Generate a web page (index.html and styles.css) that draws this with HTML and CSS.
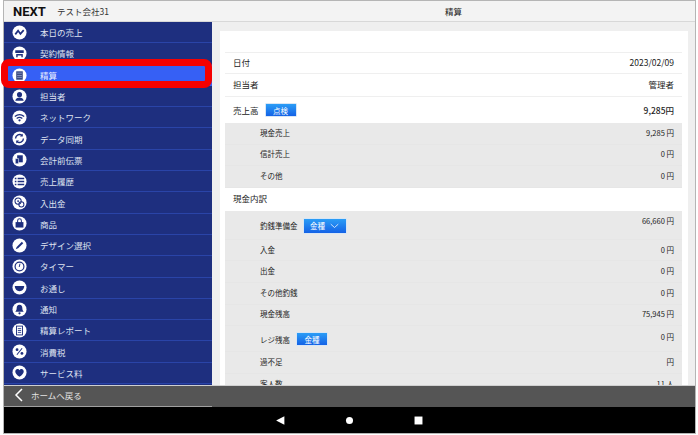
FILE: index.html
```html
<!DOCTYPE html>
<html lang="ja">
<head>
    <meta charset="UTF-8">
    <meta name="viewport" content="width=device-width, initial-scale=1.0">
    <title>精算</title>
    <link rel="stylesheet" href="styles.css">
</head>
<body>
    <div class="frame">
        <header class="topbar">
            <div class="brand"><span class="logo">NEXT</span><span class="company">テスト会社31</span></div>
            <div class="page-title">精算</div>
        </header>
        <div class="middle">
            <nav class="sidebar">
                <a class="menu-item"><svg class="icon" viewBox="0 0 16 16"><circle cx="8" cy="8" r="7.5" fill="#fff"/><path d="M3.5 10 6.5 6 9 9.5 12.5 5.5" fill="none" stroke="#1e2f7f" stroke-width="1.8"/></svg>本日の売上</a>
                <a class="menu-item"><svg class="icon" viewBox="0 0 16 16"><circle cx="8" cy="8" r="7.5" fill="#fff"/><path d="M3.5 4.5h9v3h-9zM4.5 8.5h7v3.5h-1.5v-2h-4v2h-1.500z" fill="#1e2f7f"/></svg>契約情報</a>
                <a class="menu-item active"><svg class="icon" viewBox="0 0 16 16"><circle cx="8" cy="8" r="7.5" fill="#fff"/><rect x="4.500" y="3.500" width="7" height="9" fill="#3a4a80"/><path d="M5.500 5.500h5M5.500 8h5M5.500 10h5" stroke="#9aa6d0" stroke-width=".8"/></svg>精算</a>
                <a class="menu-item"><svg class="icon" viewBox="0 0 16 16"><circle cx="8" cy="8" r="7.500" fill="#fff"/><circle cx="8" cy="6" r="2.700" fill="#1e2f7f"/><path d="M3.500 12.500c.5-2.500 2.300-3.500 4.500-3.500s4 1 4.500 3.500z" fill="#1e2f7f"/></svg>担当者</a>
                <a class="menu-item"><svg class="icon" viewBox="0 0 16 16"><circle cx="8" cy="8" r="7.500" fill="#fff"/><path d="M3 7c3-2.500 7-2.500 10 0M5 9c2-1.500 4-1.500 6 0" fill="none" stroke="#1e2f7f" stroke-width="1.300"/><circle cx="8" cy="11" r="1.200" fill="#1e2f7f"/></svg>ネットワーク</a>
                <a class="menu-item"><svg class="icon" viewBox="0 0 16 16"><circle cx="8" cy="8" r="7.500" fill="#fff"/><path d="M3.800 8a4.200 4.200 0 0 1 7-3.100M12.200 8a4.200 4.200 0 0 1-7 3.100" fill="none" stroke="#1e2f7f" stroke-width="1.500"/><path d="M11.500 2.800v3h-3zM4.500 13.200v-3h3z" fill="#1e2f7f"/></svg>データ同期</a>
                <a class="menu-item"><svg class="icon" viewBox="0 0 16 16"><circle cx="8" cy="8" r="7.500" fill="#fff"/><path d="M5.500 3.500h6v7.500h-6z" fill="#1e2f7f"/><path d="M3.500 7h3.500v5.500h-3.500z" fill="#1e2f7f" stroke="#fff" stroke-width=".6"/></svg>会計前伝票</a>
                <a class="menu-item"><svg class="icon" viewBox="0 0 16 16"><circle cx="8" cy="8" r="7.500" fill="#fff"/><path d="M6 4.800h7M6 8h7M6 11.200h7" stroke="#1e2f7f" stroke-width="1.500"/><path d="M3 4.800h1.700M3 8h1.700M3 11.200h1.700" stroke="#1e2f7f" stroke-width="1.500"/></svg>売上履歴</a>
                <a class="menu-item"><svg class="icon" viewBox="0 0 16 16"><circle cx="8" cy="8" r="7.500" fill="#fff"/><circle cx="6.500" cy="6.500" r="3.300" fill="none" stroke="#1e2f7f" stroke-width="1.100"/><circle cx="10" cy="10" r="2.700" fill="none" stroke="#1e2f7f" stroke-width="1.100"/><circle cx="6.500" cy="6.500" r="1" fill="#1e2f7f"/></svg>入出金</a>
                <a class="menu-item"><svg class="icon" viewBox="0 0 16 16"><circle cx="8" cy="8" r="7.500" fill="#fff"/><path d="M3.800 6.500h8.400v5.800h-8.400z" fill="#1e2f7f"/><path d="M6 7.500v-2.500a2 2 0 0 1 4 0v2.500" fill="none" stroke="#1e2f7f" stroke-width="1.100"/></svg>商品</a>
                <a class="menu-item"><svg class="icon" viewBox="0 0 16 16"><circle cx="8" cy="8" r="7.500" fill="#fff"/><path d="M4 12 5 9.500 10.500 4l1.500 1.500L6.500 11z" fill="#1e2f7f"/></svg>デザイン選択</a>
                <a class="menu-item"><svg class="icon" viewBox="0 0 16 16"><circle cx="8" cy="8" r="7.500" fill="#fff"/><circle cx="8" cy="8" r="4.700" fill="none" stroke="#1e2f7f" stroke-width="1.300"/><path d="M8.500 5 7.700 8.500" stroke="#1e2f7f" stroke-width="1"/></svg>タイマー</a>
                <a class="menu-item"><svg class="icon" viewBox="0 0 16 16"><circle cx="8" cy="8" r="7.500" fill="#fff"/><path d="M3 6.500h10c0 3-2 5.500-5 5.500s-5-2.500-5-5.500z" fill="#1e2f7f"/></svg>お通し</a>
                <a class="menu-item"><svg class="icon" viewBox="0 0 16 16"><circle cx="8" cy="8" r="7.500" fill="#fff"/><path d="M8 3c2.200 0 3 1.800 3 3.500 0 2 .7 3 1.500 4h-9c.8-1 1.500-2 1.500-4C5 4.800 5.800 3 8 3z" fill="#1e2f7f"/><circle cx="8" cy="12" r="1.200" fill="#1e2f7f"/></svg>通知</a>
                <a class="menu-item"><svg class="icon" viewBox="0 0 16 16"><circle cx="8" cy="8" r="7.500" fill="#fff"/><rect x="4.800" y="3.300" width="6.400" height="9.400" fill="none" stroke="#1e2f7f" stroke-width="1"/><path d="M6.200 6h3.600M6.200 8h3.600M6.200 10h3.600" stroke="#1e2f7f" stroke-width=".9"/></svg>精算レポート</a>
                <a class="menu-item"><svg class="icon" viewBox="0 0 16 16"><circle cx="8" cy="8" r="7.500" fill="#fff"/><path d="M10.800 4.500 5.200 11.500" stroke="#1e2f7f" stroke-width="1.100"/><circle cx="5.400" cy="6" r="1.500" fill="#1e2f7f"/><circle cx="10.600" cy="10" r="1.500" fill="#1e2f7f"/></svg>消費税</a>
                <a class="menu-item"><svg class="icon" viewBox="0 0 16 16"><circle cx="8" cy="8" r="7.500" fill="#fff"/><path d="M8 12.500C5 10.300 3.500 8.800 3.500 6.800 3.500 5.300 4.600 4.300 5.800 4.300c1 0 1.700.5 2.200 1.300.5-.8 1.200-1.300 2.200-1.300 1.200 0 2.300 1 2.300 2.500 0 2-1.500 3.500-4.500 5.700z" fill="#1e2f7f"/></svg>サービス料</a>
            </nav>
            <main class="content">
                <div class="card">
                    <div class="row first"><span>日付</span><span>2023/02/09</span></div>
                    <div class="row"><span>担当者</span><span>管理者</span></div>
                    <div class="row sales"><span class="label"><span>売上高</span><button class="btn btn-check">点検</button></span><strong>9,285円</strong></div>
                    <div class="group">
                        <div class="sub-row"><span>現金売上</span><span>9,285 円</span></div>
                        <div class="sub-row"><span>信計売上</span><span>0 円</span></div>
                        <div class="sub-row"><span>その他</span><span>0 円</span></div>
                    </div>
                    <div class="row plain"><span>現金内訳</span></div>
                    <div class="group">
                        <div class="sub-row tall"><span class="label"><span>釣銭準備金</span><button class="btn btn-drop">金種<svg class="chevron" viewBox="0 0 12 7"><path d="M1 1l5 4.500L11 1" fill="none" stroke="#fff" stroke-width="1"/></svg></button></span><span class="top-value">66,660 円</span></div>
                        <div class="sub-row"><span>入金</span><span>0 円</span></div>
                        <div class="sub-row"><span>出金</span><span>0 円</span></div>
                        <div class="sub-row"><span>その他釣銭</span><span>0 円</span></div>
                        <div class="sub-row"><span>現金残高</span><span>75,945 円</span></div>
                        <div class="sub-row mid"><span class="label"><span>レジ残高</span><button class="btn btn-coin">金種</button></span><span class="top-value">0 円</span></div>
                        <div class="sub-row"><span>過不足</span><span>円</span></div>
                        <div class="sub-row"><span>客人数</span><span>11 人</span></div>
                    </div>
                </div>
            </main>
        </div>
        <div class="home-bar">
            <a class="home-link"><svg class="back" viewBox="0 0 10 14"><path d="M8 1 2 7l6 6" fill="none" stroke="#fff" stroke-width="1.500"/></svg>ホームへ戻る</a>
        </div>
        <div class="navbar">
            <span class="nav-slot"><svg class="nav-icon" viewBox="0 0 10 10"><path d="M8.500 1.200v7.600L1 5z" fill="#fff"/></svg></span>
            <span class="nav-slot"><svg class="nav-icon" viewBox="0 0 10 10"><circle cx="5" cy="5" r="3.200" fill="#fff"/></svg></span>
            <span class="nav-slot"><svg class="nav-icon" viewBox="0 0 10 10"><rect x="1.400" y="1.400" width="7.200" height="7.200" fill="#fff"/></svg></span>
        </div>
    </div>
</body>
</html>
```
FILE: styles.css
```css
* {
    box-sizing: border-box;
}
body {
    margin: 0;
    background: #fff;
    font-family: "Noto Sans CJK JP", "Noto Sans", sans-serif;
    color: #222;
}
.frame {
    width: 693px;
    height: 434px;
    margin-left: 3px;
    border: 1px solid #b5b5b5;
    display: flex;
    flex-direction: column;
}
.topbar {
    height: 21px;
    flex: none;
    display: flex;
    background: #f3f3f3;
    border-bottom: 1px solid #d8d8d8;
}
.brand {
    width: 208px;
    display: flex;
    align-items: center;
    padding-left: 9px;
}
.logo {
    font-family: Roboto, sans-serif;
    font-size: 13px;
    font-weight: bold;
    color: #111;
    width: 44px;
}
.company {
    font-size: 8.5px;
    color: #333;
}
.page-title {
    flex: 1;
    text-align: center;
    font-size: 8.5px;
    line-height: 20px;
}
.middle {
    height: 363px;
    flex: none;
    display: flex;
}
.sidebar {
    width: 208px;
    flex: none;
    background: #1e2f7f;
    position: relative;
}
.menu-item {
    height: 21.3px;
    display: flex;
    align-items: center;
    font-size: 8.5px;
    color: #dfe3f0;
    border-bottom: 1px solid #2a44a8;
    padding-left: 7.5px;
}
.icon {
    width: 15px;
    height: 15px;
    margin-right: 13.5px;
    flex: none;
}
.menu-item.active {
    background: #3660f5;
    color: #e8ecff;
    border-bottom: 0;
}
.menu-item.active::after {
    content: "";
    box-sizing: border-box;
    position: absolute;
    left: -3px;
    top: 37px;
    width: 211px;
    height: 29px;
    border: 7px solid #f50000;
    border-radius: 8px;
}
.content {
    flex: 1;
    min-width: 0;
    background: #efefef;
    padding: 9px 7px 0 8px;
    overflow: hidden;
}
.card {
    background: #fff;
    padding: 21px 6px 0 5px;
    height: 400px;
}
.row {
    height: 23px;
    display: flex;
    justify-content: space-between;
    align-items: center;
    padding: 0 8px 2px;
    font-size: 8.5px;
    border-bottom: 1px solid #efefef;
}
.row.first {
    height: 22px;
    border-top: 1px solid #efefef;
}
.row.sales {
    height: 26px;
    padding-bottom: 0;
    border-bottom: 0;
}
.row.sales strong {
    font-weight: 500;
}
.row.plain {
    border-bottom: 0;
}
.group {
    background: #e9e9e9;
}
.sub-row {
    height: 21.6px;
    display: flex;
    justify-content: space-between;
    align-items: center;
    padding: 0 8px 2px 35px;
    font-size: 7.5px;
    border-bottom: 1px solid #e6e6e6;
}
.sub-row.tall {
    height: 29px;
    align-items: flex-start;
    padding-top: 4px;
}
.sub-row.tall .label {
    margin-top: 3px;
    gap: 5px;
}
.sub-row.mid {
    height: 26px;
    align-items: flex-start;
    padding-top: 5px;
}
.sub-row.mid .label {
    margin-top: 1px;
}
.top-value {
    line-height: 11px;
}
.label {
    display: flex;
    align-items: center;
    gap: 6px;
}
.btn {
    border: 1px solid #d8e6f5;
    border-radius: 1px;
    background: linear-gradient(#2b9df6, #1462e6);
    color: #fff;
    font: inherit;
    font-size: 7.5px;
    padding: 0;
    display: flex;
    align-items: center;
    justify-content: center;
}
.btn-check {
    width: 32px;
    height: 14px;
}
.btn-drop {
    width: 44px;
    height: 16px;
    gap: 5px;
}
.btn-coin {
    width: 32px;
    height: 14px;
}
.chevron {
    width: 9px;
    height: 6px;
}
.home-bar {
    height: 22px;
    flex: none;
    background: #555;
    border-top: 1px solid #d0d0d0;
}
.home-link {
    display: flex;
    align-items: center;
    height: 21px;
    width: 208px;
    padding: 0 0 2px 10px;
    font-size: 8.5px;
    color: #e4e4e4;
    border-bottom: 1px solid #a0a0a0;
}
.back {
    width: 10px;
    height: 14px;
    margin-right: 7px;
}
.navbar {
    height: 26px;
    flex: none;
    background: #000;
    display: flex;
    justify-content: center;
    align-items: center;
}
.nav-slot {
    width: 69px;
    display: flex;
    justify-content: center;
}
.nav-icon {
    width: 11px;
    height: 11px;
}
```
